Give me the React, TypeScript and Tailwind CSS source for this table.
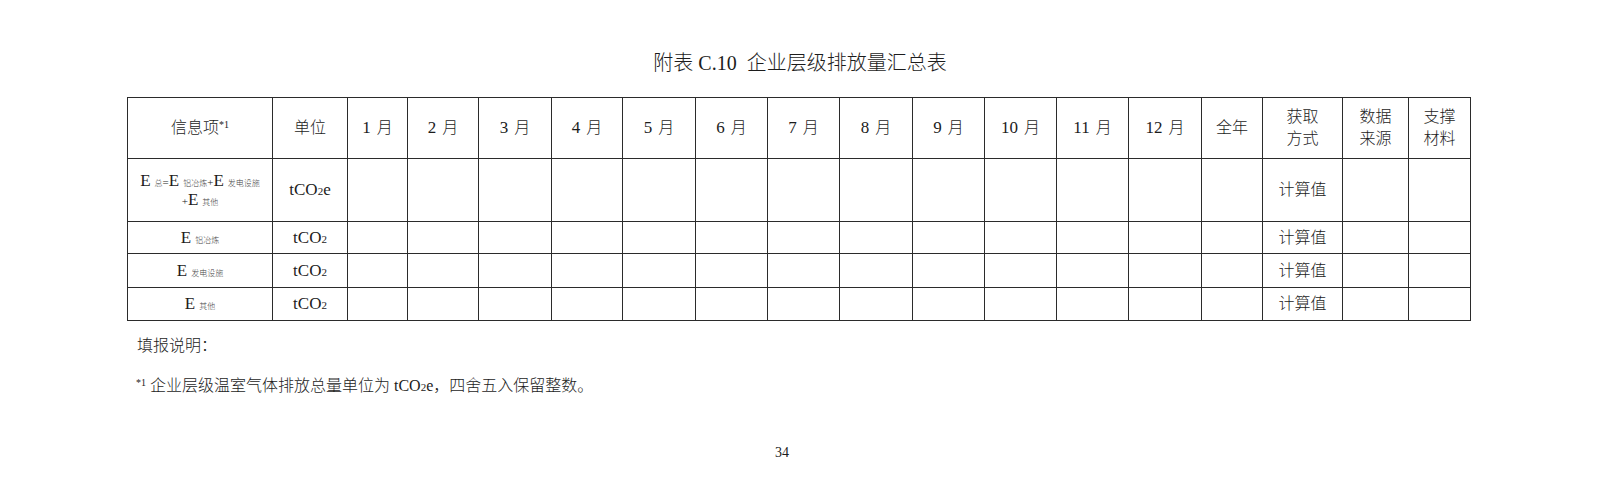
const MONTHS = ["1", "2", "3", "4", "5", "6", "7", "8", "9", "10", "11", "12"];

const COLS = [
  "w-[145px]",
  "w-[75px]",
  "w-[60px]",
  "w-[71px]",
  "w-[73px]",
  "w-[71px]",
  "w-[73px]",
  "w-[72px]",
  "w-[72px]",
  "w-[73px]",
  "w-[72px]",
  "w-[72px]",
  "w-[72px]",
  "w-[73px]",
  "w-[61px]",
  "w-[80px]",
  "w-[66px]",
  "w-[62px]",
];

const cell = "border border-[#2b2b2b] p-0 text-center align-middle";

function Sub({ children }: { children: React.ReactNode }) {
  return <span className="ml-[4px] text-[8px] font-light leading-none text-[#444]">{children}</span>;
}

function Op({ children }: { children: React.ReactNode }) {
  return <span className="text-[11px] leading-none">{children}</span>;
}

function CO2({ e }: { e?: boolean }) {
  return (
    <span className="text-[17px]">
      tCO<span className="text-[11px]">2</span>
      {e ? "e" : ""}
    </span>
  );
}

function EmptyCells() {
  return (
    <>
      {MONTHS.map((m) => (
        <td key={m} className={cell} />
      ))}
      <td className={cell} />
    </>
  );
}

export default function App() {
  const rows = [
    { label: <>E<Sub>铝冶炼</Sub></>, h: "h-[32px]" },
    { label: <>E<Sub>发电设施</Sub></>, h: "h-[34px]" },
    { label: <>E<Sub>其他</Sub></>, h: "h-[33px]" },
  ];

  return (
    <div className="h-[493px] w-[1600px] bg-white font-['Liberation_Serif','Noto_Sans_CJK_SC',serif] text-[#1c1c1c]">
      <h1 className="pt-[49px] text-center text-[20px] leading-[28px] font-light">
        附表 C.10&nbsp;&nbsp;企业层级排放量汇总表
      </h1>

      <table className="mt-[20px] ml-[127px] w-[1343px] table-fixed border-collapse text-[16px] font-light">
        <colgroup>
          {COLS.map((w, i) => (
            <col key={i} className={w} />
          ))}
        </colgroup>
        <thead>
          <tr className="h-[61px]">
            <td className={cell}>
              信息项<sup className="text-[10px]">*1</sup>
            </td>
            <td className={cell}>单位</td>
            {MONTHS.map((m) => (
              <td key={m} className={cell}>
                <span className="text-[17px]">{m}</span>
                <span className="ml-[6px]">月</span>
              </td>
            ))}
            <td className={cell}>全年</td>
            <td className={`${cell} leading-[22px]`}>
              获取
              <br />
              方式
            </td>
            <td className={`${cell} leading-[22px]`}>
              数据
              <br />
              来源
            </td>
            <td className={`${cell} leading-[22px]`}>
              支撑
              <br />
              材料
            </td>
          </tr>
        </thead>
        <tbody>
          <tr className="h-[63px]">
            <td className={`${cell} text-[17px] leading-[19px]`}>
              <div>
                E<Sub>总</Sub>
                <Op>=</Op>E<Sub>铝冶炼</Sub>
                <Op>+</Op>E<Sub>发电设施</Sub>
              </div>
              <div>
                <Op>+</Op>E<Sub>其他</Sub>
              </div>
            </td>
            <td className={cell}>
              <CO2 e />
            </td>
            <EmptyCells />
            <td className={cell}>计算值</td>
            <td className={cell} />
            <td className={cell} />
          </tr>
          {rows.map((r, i) => (
            <tr key={i} className={r.h}>
              <td className={`${cell} text-[17px]`}>{r.label}</td>
              <td className={cell}>
                <CO2 />
              </td>
              <EmptyCells />
              <td className={cell}>计算值</td>
              <td className={cell} />
              <td className={cell} />
            </tr>
          ))}
        </tbody>
      </table>

      <div className="ml-[137px] mt-[13px] text-[16px] leading-[24px] font-light">
        <p>填报说明：</p>
        <p className="mt-[16px] -ml-[1px]">
          <sup className="text-[10px]">*1</sup> 企业层级温室气体排放总量单位为 tCO
          <span className="text-[11px]">2</span>e，四舍五入保留整数。
        </p>
      </div>

      <div className="mt-[46px] pr-[36px] text-center text-[14px] leading-[16px]">34</div>
    </div>
  );
}
